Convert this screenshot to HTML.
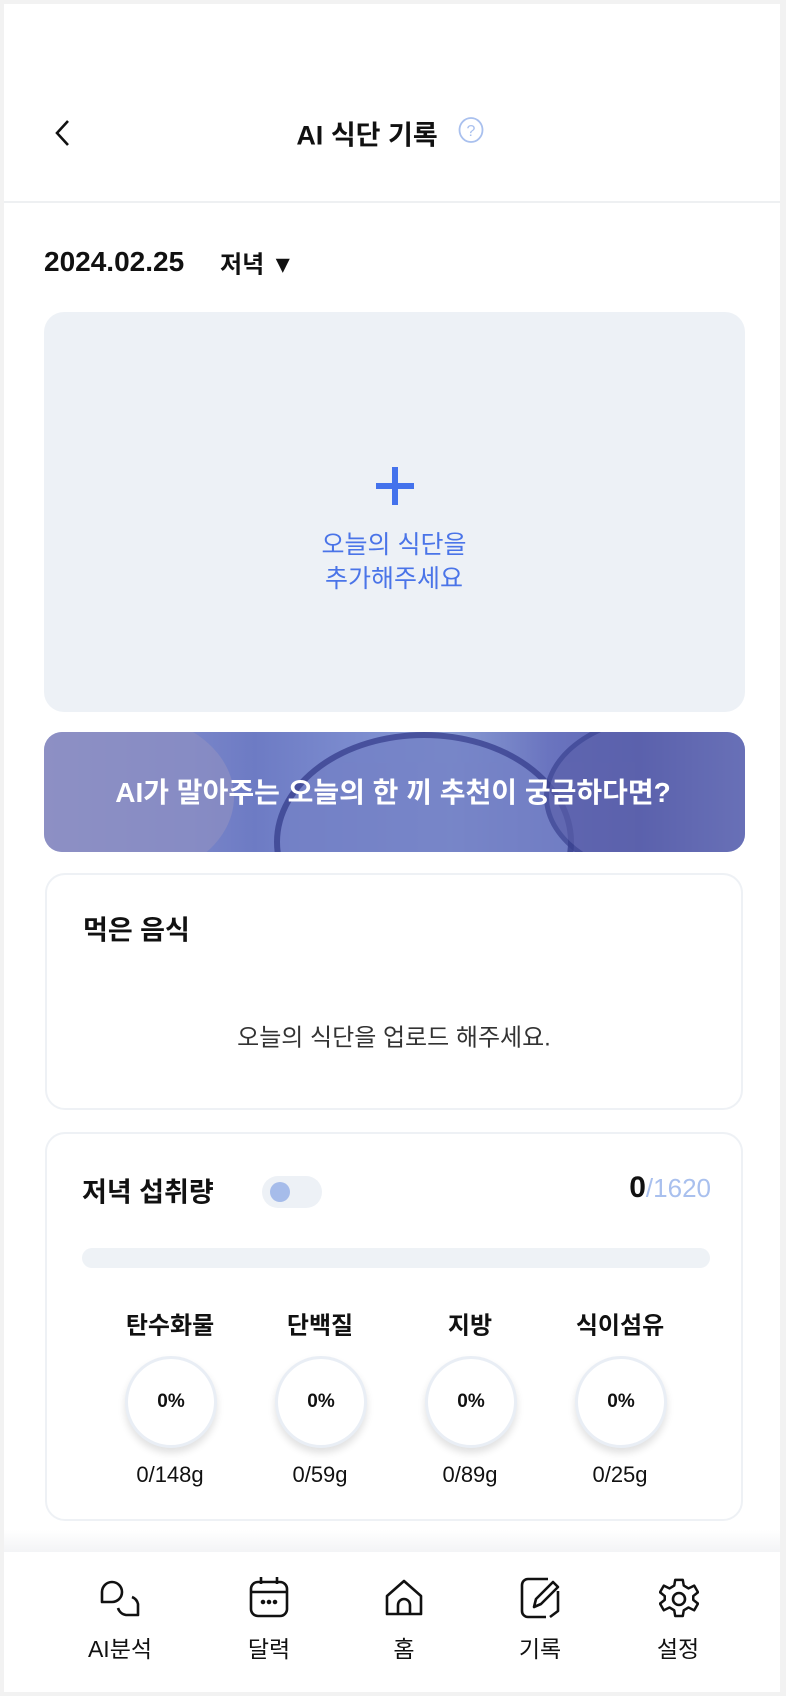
<!DOCTYPE html>
<html><head><meta charset="utf-8"><style>
*{margin:0;padding:0;box-sizing:border-box}
body{width:786px;height:1696px;background:#f2f2f2;font-family:"Liberation Sans","Noto Sans CJK KR",sans-serif;position:relative;overflow:hidden;color:#111}
.frame{position:absolute;left:4px;top:4px;width:776px;height:1688px;background:#fff}
.a{position:absolute}
.c{transform:translate(-50%,-50%);white-space:nowrap}
.l{transform:translateY(-50%);white-space:nowrap}
.card{position:absolute;left:45px;width:698px;border:2px solid #eef1f5;border-radius:20px;background:#fff}
.circ{position:absolute;width:92px;height:92px;border-radius:50%;background:#fff;border:3px solid #e9eef5;box-shadow:0 5px 8px rgba(0,0,0,.12);transform:translate(-50%,-50%);display:flex;align-items:center;justify-content:center;font-weight:700;font-size:19px}
.lbl{font-size:24px;font-weight:700}
.g{font-size:22px}
.nav{font-size:23px}
</style></head><body>
<div class="frame"></div>
<svg class="a" style="left:52px;top:118px" width="22" height="30" viewBox="0 0 22 30"><path d="M16 3 L5 15 L16 27" fill="none" stroke="#111" stroke-width="2.6"/></svg>
<div class="a c" style="left:367px;top:133px;font-size:27px;font-weight:700">AI 식단 기록</div>
<svg class="a" style="left:457px;top:116px" width="28" height="30" viewBox="0 0 28 30"><ellipse cx="14" cy="14" rx="11.5" ry="12" fill="none" stroke="#a9c0ee" stroke-width="1.8"/><text x="14" y="20" font-size="16" text-anchor="middle" fill="#a9c0ee" font-family="Liberation Sans">?</text></svg>
<div class="a" style="left:4px;top:201px;width:776px;height:2px;background:#eef0f2"></div>
<div class="a l" style="left:44px;top:262px;font-size:28px;font-weight:700">2024.02.25</div>
<div class="a l" style="left:220px;top:262px;font-size:24px;font-weight:700">저녁 ▼</div>
<div class="a" style="left:44px;top:312px;width:701px;height:400px;background:#edf1f6;border-radius:20px"></div>
<div class="a" style="left:376px;top:483px;width:38px;height:6px;background:#4472ec"></div>
<div class="a" style="left:392px;top:467px;width:6px;height:38px;background:#4472ec"></div>
<div class="a c" style="left:394px;top:543px;font-size:25px;color:#4a74e8">오늘의 식단을</div>
<div class="a c" style="left:394px;top:577px;font-size:25px;color:#4a74e8">추가해주세요</div>
<div class="a" style="left:44px;top:732px;width:701px;height:120px;border-radius:18px;overflow:hidden;background:linear-gradient(90deg,#8d93c8 0%,#7a86c9 20%,#6d7bc4 30%,#7c8ccf 45%,#889bd3 58%,#6a74bf 72%,#5e66b3 85%,#8b98d6 100%)">
<div class="a" style="left:-40px;top:-20px;width:230px;height:170px;border-radius:50%;background:#8d8fc2;opacity:.7"></div>
<div class="a" style="left:230px;top:0px;width:300px;height:220px;border-radius:50%;border:6px solid #3a4290;background:#7481c6;opacity:.8"></div>
<div class="a" style="left:500px;top:-20px;width:260px;height:170px;border-radius:50%;border:5px solid #3a4290;background:#5b60aa;opacity:.7"></div>
</div>
<div class="a c" style="left:393px;top:791px;font-size:28px;font-weight:700;color:#fff">AI가 말아주는 오늘의 한 끼 추천이 궁금하다면?</div>
<div class="card" style="top:873px;height:237px"></div>
<div class="a l" style="left:83px;top:928px;font-size:27px;font-weight:700">먹은 음식</div>
<div class="a c" style="left:394px;top:1035px;font-size:24px;color:#333">오늘의 식단을 업로드 해주세요.</div>
<div class="card" style="top:1132px;height:389px"></div>
<div class="a l" style="left:82px;top:1190px;font-size:27px;font-weight:700">저녁 섭취량</div>
<div class="a" style="left:262px;top:1176px;width:60px;height:32px;border-radius:16px;background:#edf1f6"></div>
<div class="a" style="left:270px;top:1182px;width:20px;height:20px;border-radius:50%;background:#a6bcea"></div>
<div class="a l" style="right:75px;top:1188px;font-size:30px;font-weight:700">0<span style="color:#a9c0ee;font-weight:400;font-size:26px">/1620</span></div>
<div class="a" style="left:82px;top:1248px;width:628px;height:20px;border-radius:10px;background:#eef2f6"></div>
<div class="a c lbl" style="left:170px;top:1323px">탄수화물</div>
<div class="a c lbl" style="left:320px;top:1323px">단백질</div>
<div class="a c lbl" style="left:470px;top:1323px">지방</div>
<div class="a c lbl" style="left:620px;top:1323px">식이섬유</div>
<div class="circ" style="left:171px;top:1402px">0%</div>
<div class="circ" style="left:321px;top:1402px">0%</div>
<div class="circ" style="left:471px;top:1402px">0%</div>
<div class="circ" style="left:621px;top:1402px">0%</div>
<div class="a c g" style="left:170px;top:1475px">0/148g</div>
<div class="a c g" style="left:320px;top:1475px">0/59g</div>
<div class="a c g" style="left:470px;top:1475px">0/89g</div>
<div class="a c g" style="left:620px;top:1475px">0/25g</div>
<div class="a" style="left:4px;top:1530px;width:776px;height:22px;background:linear-gradient(#fff,#f3f4f6)"></div>
<svg class="a" style="left:98px;top:1578px" width="44" height="42" viewBox="0 0 44 42" fill="none" stroke="#111" stroke-width="2.6" stroke-linejoin="round">
<path d="M4 24 V14 A10 10 0 0 1 24 14 A10 10 0 0 1 14 24 Z"/><path d="M20 30 A10 10 0 0 0 28 37 H40 V26 A10 10 0 0 0 34 19"/></svg>
<svg class="a" style="left:249px;top:1576px" width="40" height="44" viewBox="0 0 40 44" fill="none" stroke="#111" stroke-width="2.6">
<rect x="2" y="6" width="36" height="34" rx="7"/><path d="M12 1 V8 M28 1 V8 M2 16 H38"/><circle cx="14" cy="26" r="1" fill="#111"/><circle cx="20" cy="26" r="1" fill="#111"/><circle cx="26" cy="26" r="1" fill="#111"/></svg>
<svg class="a" style="left:384px;top:1578px" width="40" height="40" viewBox="0 0 40 40" fill="none" stroke="#111" stroke-width="2.6" stroke-linejoin="round">
<path d="M3 36 V18 L20 3 L37 18 V36 Z"/><path d="M14 36 V27 A6 6 0 0 1 26 27 V36"/></svg>
<svg class="a" style="left:520px;top:1577px" width="42" height="42" viewBox="0 0 42 42" fill="none" stroke="#111" stroke-width="2.6" stroke-linejoin="round">
<path d="M28 2 H8 A6 6 0 0 0 2 8 V34 A6 6 0 0 0 8 40 H26"/><path d="M38 14 V34 L30 40"/><path d="M14 30 L16 22 L33 5 L38 10 L21 27 Z"/></svg>
<svg class="a" style="left:659px;top:1578px" width="40" height="42" viewBox="0 0 40 42" fill="none" stroke="#111" stroke-width="2.6" stroke-linejoin="round">
<path d="M16 2 H24 L25 8 L30 11 L36 8 L40 15 L35 19 V23 L40 27 L36 34 L30 31 L25 34 L24 40 H16 L15 34 L10 31 L4 34 L0 27 L5 23 V19 L0 15 L4 8 L10 11 L15 8 Z" transform="translate(1 0) scale(.95)"/><circle cx="20" cy="21" r="6"/></svg>
<div class="a c nav" style="left:120px;top:1647px">AI분석</div>
<div class="a c nav" style="left:269px;top:1647px">달력</div>
<div class="a c nav" style="left:404px;top:1647px">홈</div>
<div class="a c nav" style="left:540px;top:1647px">기록</div>
<div class="a c nav" style="left:678px;top:1647px">설정</div>
</body></html>
